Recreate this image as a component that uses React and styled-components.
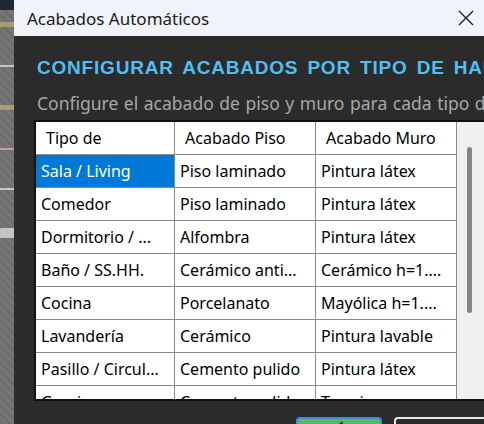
import React from "react"
import styled, { createGlobalStyle } from "styled-components"

const GlobalStyle = createGlobalStyle`
  html, body {
    margin: 0;
    padding: 0;
    width: 484px;
    height: 424px;
    overflow: hidden;
    background: #2b2b2b;
  }
  #root {
    height: 424px;
  }
`

const Screen = styled.div`
  display: flex;
  height: 424px;
  width: 484px;
  overflow: hidden;
  font-family: "Noto Sans", "Open Sans", sans-serif;
`

// the CAD app peeking out behind the dialog
const BackStrip = styled.div`
  flex: 0 0 14px;
  background:
    repeating-linear-gradient(45deg, #6e6e6e 0 3px, #767676 3px 6px);
  border-top: 10px solid #1f2733;
  display: flex;
  flex-direction: column;
  gap: 38px;
  padding-top: 12px;
`

const StripLine = styled.div`
  height: ${(p) => p.h || 2}px;
  background: ${(p) => p.c || "#c8c8c8"};
`

const Dialog = styled.div`
  flex: 1;
  min-width: 0;
  display: flex;
  flex-direction: column;
  background: #2b2b2b;
`

const TitleBar = styled.div`
  height: 36px;
  flex: 0 0 36px;
  background: #f0f3f9;
  display: flex;
  align-items: center;
  justify-content: space-between;
  padding: 0 10px 0 13px;
  font-size: 17px;
  color: #1a1a1a;
`

const CloseButton = styled.div`
  width: 16px;
  height: 16px;
  display: flex;
  svg {
    display: block;
  }
`

const Body = styled.div`
  flex: 1;
  padding: 20px 0 0 20px;
  display: flex;
  flex-direction: column;
  overflow: hidden;
`

const Heading = styled.div`
  font-family: "Liberation Sans", Arial, sans-serif;
  font-weight: bold;
  font-size: 19px;
  letter-spacing: 0.8px;
  word-spacing: 3px;
  color: #4fbff5;
  white-space: nowrap;
  padding-left: 3px;
  line-height: 24px;
`

const SubText = styled.div`
  margin-top: 12px;
  font-size: 17.5px;
  word-spacing: 1px;
  color: #a8a8a8;
  white-space: nowrap;
  padding-left: 3px;
  line-height: 23px;
`

const TableFrame = styled.div`
  flex: 0 0 auto;
  margin-top: 5px;
  height: 277px;
  width: 480px;
  border: 2px solid #111;
  border-right: none;
  display: flex;
  background: #fff;
  overflow: hidden;
`

const Grid = styled.div`
  display: grid;
  grid-template-columns: 139px 141px 141px;
  grid-auto-rows: 33px;
  align-content: start;
  flex: 0 0 421px;
`

const Cell = styled.div`
  border-right: 1.5px solid #8a8a8a;
  border-bottom: 1.5px solid #8a8a8a;
  padding: 0 ${(p) => (p.head ? 10 : 5)}px;
  font-size: 16px;
  color: ${(p) => (p.selected ? "#fff" : "#000")};
  background: ${(p) => (p.selected ? "#0078d7" : "#fff")};
  display: flex;
  align-items: center;
  white-space: nowrap;
  overflow: hidden;
`

const ScrollTrack = styled.div`
  flex: 1;
  background: #f0f0f0;
  position: relative;
`

const ScrollThumb = styled.div`
  position: absolute;
  left: 10px;
  top: 25px;
  width: 5px;
  height: 166px;
  border-radius: 3px;
  background: #858585;
`

const ButtonRow = styled.div`
  flex: 0 0 auto;
  display: flex;
  gap: 12px;
  padding: 16px 0 0 262px;
`

const Button = styled.div`
  flex: 0 0 ${(p) => p.w}px;
  height: 30px;
  border-radius: 4px;
  border: 2px solid ${(p) => (p.primary ? "#3a8ee6" : "#e8e8e8")};
  background: ${(p) => (p.primary ? "#5cb85c" : "#2b2b2b")};
  box-sizing: border-box;
  display: flex;
  justify-content: center;
  font-size: 14px;
  color: #000;
  line-height: 14px;
`

const rows = [
  ["Sala / Living", "Piso laminado", "Pintura látex"],
  ["Comedor", "Piso laminado", "Pintura látex"],
  ["Dormitorio / ...", "Alfombra", "Pintura látex"],
  ["Baño / SS.HH.", "Cerámico anti...", "Cerámico h=1...."],
  ["Cocina", "Porcelanato", "Mayólica h=1...."],
  ["Lavandería", "Cerámico", "Pintura lavable"],
  ["Pasillo / Circul...", "Cemento pulido", "Pintura látex"],
  ["Garaje", "Cemento pulido", "Tarrajeo"],
]

export default function App() {
  return (
    <>
      <GlobalStyle />
      <Screen>
        <BackStrip>
          <StripLine h={5} c="#a89c70" />
          <StripLine />
          <StripLine h={5} c="#a89c70" />
          <StripLine c="#c99a9a" />
          <StripLine />
          <StripLine h={10} c="#c4c4c4" />
        </BackStrip>
        <Dialog>
          <TitleBar>
            <span>Acabados Automáticos</span>
            <CloseButton>
              <svg width="16" height="16" viewBox="0 0 16 16">
                <path d="M1 1 L15 15 M15 1 L1 15" stroke="#1a1a1a" strokeWidth="1.3" />
              </svg>
            </CloseButton>
          </TitleBar>
          <Body>
            <Heading>CONFIGURAR ACABADOS POR TIPO DE HABITACIÓN</Heading>
            <SubText>
              Configure el acabado de piso y muro para cada tipo de habitación
            </SubText>
            <TableFrame>
              <Grid>
                <Cell head>Tipo de</Cell>
                <Cell head>Acabado Piso</Cell>
                <Cell head>Acabado Muro</Cell>
                {rows.map((r, i) =>
                  r.map((t, j) => (
                    <Cell key={i + "-" + j} selected={i === 0 && j === 0}>
                      {t}
                    </Cell>
                  ))
                )}
              </Grid>
              <ScrollTrack>
                <ScrollThumb />
              </ScrollTrack>
            </TableFrame>
            <ButtonRow>
              <Button primary w={86}>✔</Button>
              <Button w={100} />
            </ButtonRow>
          </Body>
        </Dialog>
      </Screen>
    </>
  )
}
